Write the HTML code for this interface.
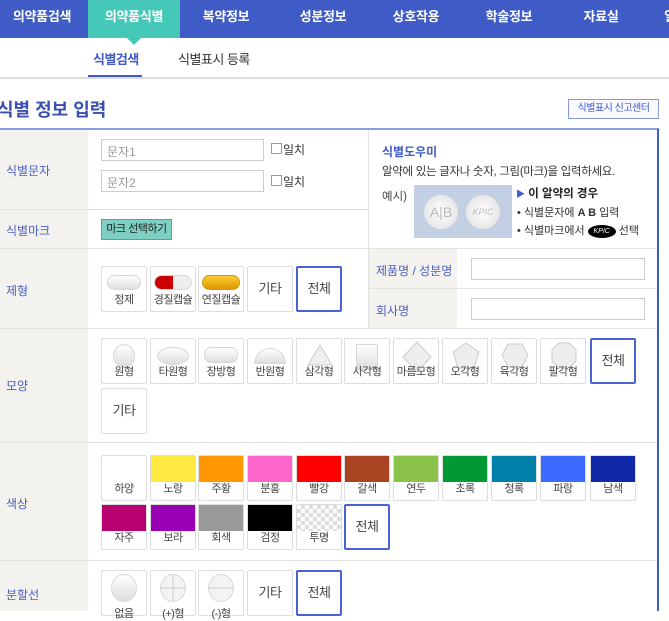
<!DOCTYPE html><html><head><meta charset="utf-8"><style>
*{box-sizing:border-box;margin:0;padding:0}
body{width:669px;height:611px;overflow:hidden;background:#fff;font-family:"Liberation Sans","Noto Sans CJK KR",sans-serif;position:relative;color:#333}
.a{position:absolute}
.nav{left:0;top:0;width:669px;height:38px;background:#3f5bc6}
.nv{top:0;height:38px;width:90px;margin-left:-45px;text-align:center;line-height:33px;color:#fff;font-weight:bold;font-size:13px;letter-spacing:-0.3px;white-space:nowrap}
.lbl{color:#4a5fc0;font-size:12px}
.b{position:absolute;width:46px;height:46px;border:1px solid #ddd;border-radius:2px;background:#fff;font-size:11px;color:#444;text-align:center;letter-spacing:-0.5px}
.b span{position:absolute;left:0;right:0;bottom:4px}
.b.t{line-height:44px;font-size:13px}
.b.sel{border:2px solid #4a64cc;line-height:42px;font-size:13px}
.sh{position:absolute;left:50%;transform:translateX(-50%);top:5px;background:linear-gradient(#fff,#ddd);border:1px solid #d8d8d8}
.sw{position:absolute;left:0;top:0;right:0;height:26px}
</style></head><body>
<div class="a nav"></div>
<div class="a" style="left:88px;top:0;width:92px;height:38px;background:#45c8b8"></div>
<div class="a" style="left:127px;top:38px;width:0;height:0;border-left:7px solid transparent;border-right:7px solid transparent;border-top:7px solid #45c8b8"></div>
<div class="a nv" style="left:42px">의약품검색</div>
<div class="a nv" style="left:134px">의약품식별</div>
<div class="a nv" style="left:226px">복약정보</div>
<div class="a nv" style="left:323px">성분정보</div>
<div class="a nv" style="left:416px">상호작용</div>
<div class="a nv" style="left:509px">학술정보</div>
<div class="a nv" style="left:601px">자료실</div>
<div class="a nv" style="left:670px">일</div>
<div class="a" style="left:93px;top:49px;font-size:13px;color:#3f5bc6;font-weight:bold;letter-spacing:-0.5px">식별검색</div>
<div class="a" style="left:88px;top:75px;width:54px;height:2px;background:#3f5bc6"></div>
<div class="a" style="left:178px;top:49px;font-size:13px;color:#333;letter-spacing:-0.5px">식별표시 등록</div>
<div class="a" style="left:0;top:77px;width:669px;height:2px;background:#ddd"></div>
<div class="a" style="left:-3px;top:96px;font-size:18px;font-weight:bold;color:#3a50b0">식별 정보 입력</div>
<div class="a" style="left:568px;top:99px;width:91px;height:20px;border:1px solid #8899d8;font-size:10px;color:#3f5bc6;text-align:center;line-height:18px;background:#f8f9ff;letter-spacing:-0.5px">식별표시 신고센터</div>
<div class="a" style="left:0;top:128px;width:659px;height:2px;background:#8b9be0"></div>
<div class="a" style="left:657px;top:129px;width:2px;height:482px;background:#3f5bc6"></div>
<div class="a" style="left:0;top:130px;width:88px;height:481px;background:#f4f2ee"></div>
<div class="a" style="left:0;top:209px;width:368px;height:1px;background:#e2e2e2"></div>
<div class="a" style="left:0;top:248px;width:657px;height:1px;background:#e2e2e2"></div>
<div class="a" style="left:0;top:328px;width:657px;height:1px;background:#e2e2e2"></div>
<div class="a" style="left:0;top:442px;width:657px;height:1px;background:#e2e2e2"></div>
<div class="a" style="left:0;top:560px;width:657px;height:1px;background:#e2e2e2"></div>
<div class="a" style="left:368px;top:130px;width:1px;height:198px;background:#e2e2e2"></div>
<div class="a" style="left:369px;top:249px;width:88px;height:79px;background:#f4f2ee"></div>
<div class="a" style="left:369px;top:288px;width:288px;height:1px;background:#e2e2e2"></div>
<div class="a lbl" style="left:6px;top:162px">식별문자</div>
<div class="a lbl" style="left:6px;top:222px">식별마크</div>
<div class="a lbl" style="left:6px;top:282px">제형</div>
<div class="a lbl" style="left:6px;top:377px">모양</div>
<div class="a lbl" style="left:6px;top:495px">색상</div>
<div class="a lbl" style="left:6px;top:586px">분할선</div>
<div class="a" style="left:101px;top:139px;width:163px;height:22px;border:1px solid #ccc;font-size:12px;color:#999;padding:3px 5px">문자1</div>
<div class="a" style="left:101px;top:170px;width:163px;height:22px;border:1px solid #ccc;font-size:12px;color:#999;padding:3px 5px">문자2</div>
<div class="a" style="left:271px;top:143px;width:11px;height:11px;border:1px solid #999"></div>
<div class="a" style="left:283px;top:141px;font-size:12px">일치</div>
<div class="a" style="left:271px;top:175px;width:11px;height:11px;border:1px solid #999"></div>
<div class="a" style="left:283px;top:173px;font-size:12px">일치</div>
<div class="a" style="left:101px;top:219px;width:71px;height:21px;background:#7dd0c2;border:1px solid #4a9;font-size:11px;text-align:center;line-height:19px;color:#222;letter-spacing:-0.5px">마크 선택하기</div>
<div class="a" style="left:382px;top:143px;font-size:12px;color:#3f5bc6;font-weight:bold">식별도우미</div>
<div class="a" style="left:382px;top:163px;font-size:11.5px;color:#333;letter-spacing:-0.3px">알약에 있는 글자나 숫자, 그림(마크)을 입력하세요.</div>
<div class="a" style="left:382px;top:188px;font-size:11.5px;color:#444">예시)</div>
<div class="a" style="left:414px;top:185px;width:98px;height:53px;background:#c3cfe2"></div>
<div class="a" style="left:424px;top:195px;width:34px;height:34px;border-radius:50%;background:radial-gradient(#fff,#ddd);font-size:14px;color:#bbb;text-align:center;line-height:34px">A|B</div>
<div class="a" style="left:466px;top:195px;width:34px;height:34px;border-radius:50%;background:radial-gradient(#fff,#ddd);font-size:9px;color:#bbb;text-align:center;line-height:34px;font-style:italic">KPIC</div>
<div class="a" style="left:516px;top:185px;font-size:11.5px;font-weight:bold;color:#222"><span style="color:#3f5bc6;font-size:9px">▶</span> 이 알약의 경우</div>
<div class="a" style="left:517px;top:204px;font-size:11px;color:#333">• 식별문자에 <b>A B</b> 입력</div>
<div class="a" style="left:517px;top:222px;font-size:11px;color:#333">• 식별마크에서 <span style="display:inline-block;background:#000;color:#fff;border-radius:50%;width:28px;height:13px;font-size:7px;text-align:center;line-height:13px;font-style:italic;vertical-align:middle">KPIC</span> 선택</div>
<div class="a lbl" style="left:376px;top:262px">제품명 / 성분명</div>
<div class="a lbl" style="left:376px;top:302px">회사명</div>
<div class="a" style="left:471px;top:258px;width:174px;height:22px;border:1px solid #ccc"></div>
<div class="a" style="left:471px;top:298px;width:174px;height:22px;border:1px solid #ccc"></div>

<div class="b" style="left:101px;top:266px"><div class="sh" style="width:34px;height:15px;border-radius:8px;top:8px"></div><span>정제</span></div>
<div class="b" style="left:150px;top:266px"><div class="sh" style="width:38px;height:15px;border-radius:8px;top:8px;background:linear-gradient(90deg,#c00 50%,#eee 50%)"></div><span>경질캡슐</span></div>
<div class="b" style="left:198px;top:266px"><div class="sh" style="width:38px;height:15px;border-radius:8px;top:8px;background:linear-gradient(#fc3,#d90);border-color:#c90"></div><span>연질캡슐</span></div>
<div class="b t" style="left:247px;top:266px">기타</div>
<div class="b sel" style="left:296px;top:266px">전체</div>

<div class="b" style="left:101px;top:338px"><div class="sh" style="width:22px;height:24px;border-radius:50%"></div><span>원형</span></div>
<div class="b" style="left:150px;top:338px"><div class="sh" style="width:32px;height:18px;border-radius:50%;top:8px"></div><span>타원형</span></div>
<div class="b" style="left:198px;top:338px"><div class="sh" style="width:34px;height:16px;border-radius:7px;top:8px"></div><span>장방형</span></div>
<div class="b" style="left:247px;top:338px"><div class="sh" style="width:32px;height:16px;border-radius:16px 16px 0 0;top:9px"></div><span>반원형</span></div>
<div class="b" style="left:296px;top:338px"><svg class="a" style="left:10px;top:5px" width="26" height="22"><polygon points="13,1 25,21 1,21" fill="#eee" stroke="#ccc"/></svg><span>삼각형</span></div>
<div class="b" style="left:344px;top:338px"><div class="sh" style="width:22px;height:26px;border-radius:0"></div><span>사각형</span></div>
<div class="b" style="left:393px;top:338px"><svg class="a" style="left:8px;top:2px" width="30" height="32"><polygon points="15,1 29,16 15,31 1,16" fill="#eee" stroke="#ccc"/></svg><span>마름모형</span></div>
<div class="b" style="left:442px;top:338px"><svg class="a" style="left:9px;top:3px" width="28" height="28"><polygon points="14,1 27,10 22,26 6,26 1,10" fill="#eee" stroke="#ccc"/></svg><span>오각형</span></div>
<div class="b" style="left:491px;top:338px"><svg class="a" style="left:9px;top:3px" width="28" height="28"><polygon points="7,2 21,2 27,13 21,25 7,25 1,13" fill="#eee" stroke="#ccc"/></svg><span>육각형</span></div>
<div class="b" style="left:540px;top:338px"><svg class="a" style="left:10px;top:3px" width="26" height="28"><polygon points="8,1 18,1 25,8 25,19 18,26 8,26 1,19 1,8" fill="#eee" stroke="#ccc"/></svg><span>팔각형</span></div>
<div class="b sel" style="left:590px;top:338px">전체</div>
<div class="b t" style="left:101px;top:388px">기타</div>

<div class="b" style="left:101px;top:455px"><span>하양</span></div>
<div class="b" style="left:150px;top:455px"><div class="sw" style="background:#ffe840"></div><span>노랑</span></div>
<div class="b" style="left:198px;top:455px"><div class="sw" style="background:#ff9800"></div><span>주황</span></div>
<div class="b" style="left:247px;top:455px"><div class="sw" style="background:#ff66cc"></div><span>분홍</span></div>
<div class="b" style="left:296px;top:455px"><div class="sw" style="background:#ff0000"></div><span>빨강</span></div>
<div class="b" style="left:344px;top:455px"><div class="sw" style="background:#a84422"></div><span>갈색</span></div>
<div class="b" style="left:393px;top:455px"><div class="sw" style="background:#8bc34a"></div><span>연두</span></div>
<div class="b" style="left:442px;top:455px"><div class="sw" style="background:#009933"></div><span>초록</span></div>
<div class="b" style="left:491px;top:455px"><div class="sw" style="background:#0080a8"></div><span>청록</span></div>
<div class="b" style="left:540px;top:455px"><div class="sw" style="background:#3d6bff"></div><span>파랑</span></div>
<div class="b" style="left:590px;top:455px"><div class="sw" style="background:#1128a8"></div><span>남색</span></div>
<div class="b" style="left:101px;top:504px"><div class="sw" style="background:#b8006e"></div><span>자주</span></div>
<div class="b" style="left:150px;top:504px"><div class="sw" style="background:#9900b3"></div><span>보라</span></div>
<div class="b" style="left:198px;top:504px"><div class="sw" style="background:#999"></div><span>회색</span></div>
<div class="b" style="left:247px;top:504px"><div class="sw" style="background:#000"></div><span>검정</span></div>
<div class="b" style="left:296px;top:504px"><div class="sw" style="background:repeating-conic-gradient(#ddd 0 25%,#fff 0 50%) 0 0/8px 8px"></div><span>투명</span></div>
<div class="b sel" style="left:344px;top:504px">전체</div>

<div class="b" style="left:101px;top:570px"><div class="sh" style="width:26px;height:28px;border-radius:50%;top:3px"></div><span style="bottom:-6px">없음</span></div>
<div class="b" style="left:150px;top:570px"><div class="sh" style="width:26px;height:28px;border-radius:50%;top:3px;background:linear-gradient(90deg,transparent 48%,#ccc 48%,#ccc 52%,transparent 52%),linear-gradient(transparent 48%,#ccc 48%,#ccc 52%,transparent 52%),#f3f3f3"></div><span style="bottom:-6px">(+)형</span></div>
<div class="b" style="left:198px;top:570px"><div class="sh" style="width:26px;height:28px;border-radius:50%;top:3px;background:linear-gradient(transparent 48%,#ccc 48%,#ccc 52%,transparent 52%),#f3f3f3"></div><span style="bottom:-6px">(-)형</span></div>
<div class="b t" style="left:247px;top:570px">기타</div>
<div class="b sel" style="left:296px;top:570px">전체</div>
</body></html>
